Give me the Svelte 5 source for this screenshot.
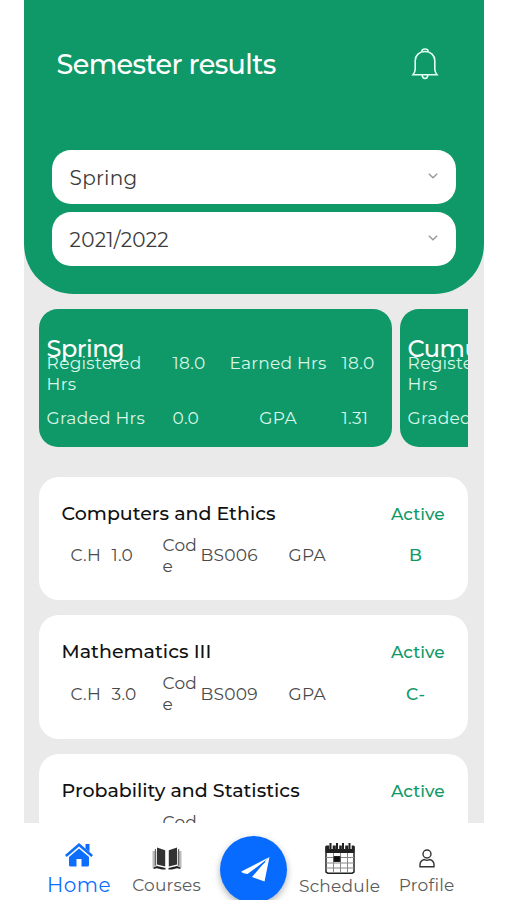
<script lang="ts">
	type Summary = {
		title: string;
		registered: string;
		earned: string;
		graded: string;
		gpa: string;
	};

	type Course = {
		name: string;
		hours: string;
		code: string;
		grade: string;
	};

	const filters = ['Spring', '2021/2022'];

	const summaries: Summary[] = [
		{ title: 'Spring', registered: '18.0', earned: '18.0', graded: '0.0', gpa: '1.31' },
		{ title: 'Cumulative', registered: '18.0', earned: '18.0', graded: '0.0', gpa: '1.31' }
	];

	const courses: Course[] = [
		{ name: 'Computers and Ethics', hours: '1.0', code: 'BS006', grade: 'B' },
		{ name: 'Mathematics III', hours: '3.0', code: 'BS009', grade: 'C-' },
		{ name: 'Probability and Statistics', hours: '3.0', code: 'BS010', grade: 'C' }
	];
</script>

<div class="screen">
	<header class="header">
		<div class="title-row">
			<h1>Semester results</h1>
			<button class="bell" aria-label="Notifications">
				<svg width="28" height="34" viewBox="0 0 28 34" fill="none" stroke="currentColor" stroke-width="1.6">
					<path d="M11 4.8V4Q11 2 14 2T17 4V4.8" />
					<path d="M14 4.5C8 4.5 4.4 8.5 4.2 13.5V22Q4.2 25 2 27.8H26Q23.8 25 23.8 22V13.5C23.6 8.5 20 4.5 14 4.5Z" />
					<path d="M11.2 28Q11.4 31.5 14 31.5T16.8 28" />
				</svg>
			</button>
		</div>

		<div class="filters">
			{#each filters as filter}
				<button class="select">
					<span>{filter}</span>
					<svg width="10" height="6" viewBox="0 0 10 6" fill="none" stroke="currentColor" stroke-width="1.4">
						<path d="M0.8 0.8L5 4.8L9.2 0.8" />
					</svg>
				</button>
			{/each}
		</div>
	</header>

	<main class="content">
		<section class="summaries">
			{#each summaries as summary}
				<article class="summary">
					<h2>{summary.title}</h2>
					<div class="summary-grid">
						<span>Registered Hrs</span>
						<span>{summary.registered}</span>
						<span class="center">Earned Hrs</span>
						<span>{summary.earned}</span>
						<span>Graded Hrs</span>
						<span>{summary.graded}</span>
						<span class="center">GPA</span>
						<span>{summary.gpa}</span>
					</div>
				</article>
			{/each}
		</section>

		<section class="courses">
			{#each courses as course}
				<article class="course">
					<div class="course-head">
						<h3>{course.name}</h3>
						<span class="status">Active</span>
					</div>
					<div class="course-info">
						<span>C.H</span>
						<span>{course.hours}</span>
						<span class="code-label">Code</span>
						<span>{course.code}</span>
						<span>GPA</span>
						<span class="grade">{course.grade}</span>
					</div>
				</article>
			{/each}
		</section>
	</main>

	<nav class="tabs">
		<a class="tab home" href="#home">
			<svg width="28" height="24" viewBox="0 0 28 24" fill="currentColor">
				<path d="M14 0L28 12L26.3 14L14 3.5L1.7 14L0 12Z" />
				<path d="M20.5 1H24.5V9L20.5 5.5Z" />
				<path d="M14 5.5L24 14V22Q24 23.5 22.5 23.5H16.5V16H11.5V23.5H5.5Q4 23.5 4 22V14Z" />
			</svg>
			<span>Home</span>
		</a>
		<a class="tab courses-tab" href="#courses">
			<svg width="30" height="23" viewBox="0 0 30 23">
				<path d="M0.5 4H4.5V19L0.5 21ZM25.5 4H29.5V21L25.5 19Z" fill="#bbb" />
				<path d="M2.8 2H4V18.5H2.8ZM26 2H27.2V18.5H26Z" fill="#666" />
				<path d="M5 0.5L13.2 3.2V19.5L5 17.5ZM25 0.5L16.8 3.2V19.5L25 17.5Z" fill="#333" />
				<path d="M1.5 20.5L5 19L13.5 21V22.5H10L5 21.2L1.5 22ZM28.5 20.5L25 19L16.5 21V22.5H20L25 21.2L28.5 22Z" fill="#222" />
			</svg>
			<span>Courses</span>
		</a>
		<button class="send" aria-label="Send">
			<svg width="29" height="25" viewBox="0 0 29 25" fill="currentColor">
				<path d="M28.5 0L0.3 14.5Q0.5 16.4 6.5 17L23.5 4.5Z" />
				<path d="M28.5 0L23.5 24.5L11 20L25 3.5Z" />
				<path d="M8 18.5L24 4.5" stroke="#076bff" stroke-width="1.2" />
			</svg>
		</button>
		<a class="tab schedule" href="#schedule">
			<svg width="30" height="31" viewBox="0 0 30 31" fill="none" stroke="#222">
				<path d="M1 4H29V29L27 30.3H3L1 29Z" stroke-width="1.5" />
				<path d="M1 3H29V9.5H1Z" fill="#222" />
				<path d="M1 14.5H29M1 20H29M1 25H29M8.5 10V30M15.5 10V30M22.5 10V30" stroke="#888" />
				<path d="M9 13.5H15V18.5H9Z" fill="#111" />
				<path d="M6 0.5V6M12.5 0.5V6M18.5 0.5V6M25 0.5V6" stroke="#fff" stroke-width="3.4" />
				<path d="M5.5 0V6.5M12 0V6.5M18 0V6.5M24.5 0V6.5" stroke-width="2" />
			</svg>
			<span>Schedule</span>
		</a>
		<a class="tab profile" href="#profile">
			<svg width="16" height="19" viewBox="0 0 16 19" fill="none" stroke="#333" stroke-width="1.4">
				<circle cx="8" cy="5" r="4" />
				<path d="M5.5 10.5Q1.2 11.5 1 15.5V17.8H15V15.5Q14.8 11.5 10.5 10.5Q8 12 5.5 10.5Z" />
			</svg>
			<span>Profile</span>
		</a>
	</nav>
</div>

<style>
	:global(body) {
		margin: 0;
		background: #fff;
	}

	.screen {
		width: 460px;
		height: 900px;
		margin-left: 23.6px;
		display: flex;
		flex-direction: column;
		overflow: hidden;
		background: #eaeaea;
		font-family: Montserrat, Inter, 'Open Sans', sans-serif;
		color: #4a4a4a;
	}

	h1,
	h2,
	h3 {
		margin: 0;
		font-weight: 500;
	}

	button {
		border: none;
		padding: 0;
		font: inherit;
	}

	svg {
		display: block;
		flex: none;
	}

	.header {
		height: 293.5px;
		flex: none;
		box-sizing: border-box;
		padding: 44px 28px 0;
		background: #0f9968;
		border-radius: 0 0 50px 50px;
		color: #fff;
	}

	.title-row {
		display: flex;
		align-items: center;
		justify-content: space-between;
		height: 40px;
		padding: 0 17px 0 5px;
	}

	h1 {
		font-size: 27px;
		letter-spacing: -0.6px;
	}

	.bell {
		background: none;
		color: #e4fff3;
	}

	.filters {
		display: grid;
		gap: 7.5px;
		margin-top: 66px;
	}

	.select {
		display: flex;
		align-items: center;
		justify-content: space-between;
		height: 54px;
		padding: 2px 18px 0;
		border-radius: 19px;
		background: #fff;
		color: #3b3b3b;
		font-size: 20px;
		letter-spacing: 0.25px;
	}

	.select svg {
		color: #999;
		margin-top: -4px;
	}

	.content {
		flex: 1;
		min-height: 0;
		overflow: hidden;
		padding: 15.5px 16px 0 15px;
	}

	.summaries {
		display: flex;
		gap: 8px;
		overflow: hidden;
	}

	.summary {
		width: 353px;
		height: 137.5px;
		flex: none;
		box-sizing: border-box;
		padding: 25px 8px 0;
		border-radius: 19px;
		background: #0f9968;
		color: #d7f6e8;
	}

	.summary h2 {
		height: 19px;
		line-height: 30px;
		font-size: 24px;
		letter-spacing: -0.5px;
		color: #fff;
	}

	.summary-grid {
		display: grid;
		grid-template-columns: 126px 42px 127px 1fr;
		row-gap: 13px;
		font-size: 17px;
		line-height: 21px;
		letter-spacing: 0.25px;
	}

	.summary-grid span:nth-child(4n + 1) {
		width: 110px;
	}

	.center {
		text-align: center;
	}

	.courses {
		display: grid;
		gap: 15px;
		margin-top: 30px;
	}

	.course {
		height: 123.5px;
		box-sizing: border-box;
		padding: 24px 23px 0;
		border-radius: 20px;
		background: #fff;
	}

	.course-head {
		display: flex;
		justify-content: space-between;
		line-height: 26px;
	}

	h3 {
		font-size: 19px;
		color: #111;
	}

	.status,
	.grade {
		color: #0f9968;
		font-weight: 500;
	}

	.status {
		font-size: 17px;
	}

	.course-info {
		display: grid;
		grid-template-columns: 41px 51px 38px 88px 98px 58px;
		align-items: center;
		height: 42px;
		margin-top: 8px;
		padding-left: 9px;
		font-size: 17px;
		line-height: 21px;
		letter-spacing: 0.2px;
	}

	.course-info .code-label {
		width: 36px;
		word-break: break-all;
	}

	.course-info .grade {
		text-align: center;
	}

	.tabs {
		height: 77px;
		flex: none;
		display: grid;
		grid-template-columns: 97px 78px 95px 78px 96px;
		padding-left: 7px;
		background: #fff;
	}

	.tab {
		display: flex;
		flex-direction: column;
		align-items: center;
		justify-content: space-between;
		height: 75px;
		box-sizing: border-box;
		color: #5c5c5c;
		font-size: 17px;
		line-height: 25px;
		letter-spacing: 0.2px;
		text-decoration: none;
		white-space: nowrap;
	}

	.home {
		padding-top: 20px;
		color: #0d6efd;
		font-size: 20px;
		letter-spacing: 0.5px;
	}

	.courses-tab {
		padding-top: 24px;
	}

	.schedule {
		padding-top: 20px;
	}

	.profile {
		padding-top: 26px;
	}

	.send {
		width: 67px;
		height: 67px;
		margin-top: 13px;
		display: flex;
		align-items: center;
		justify-content: center;
		justify-self: center;
		padding-left: 5px;
		border-radius: 50%;
		background: #076bff;
		color: #fff;
		box-shadow: 0 3px 7px rgba(0, 0, 0, 0.3);
	}
</style>
